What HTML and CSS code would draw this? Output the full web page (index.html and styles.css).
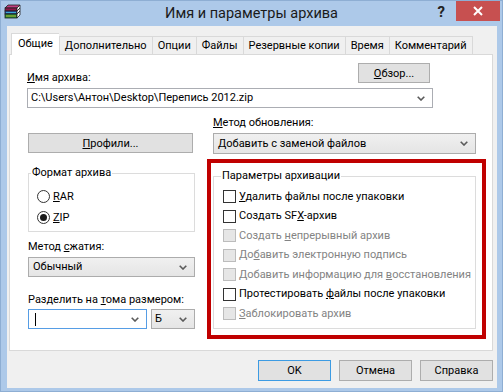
FILE: index.html
```html
<!DOCTYPE html>
<html lang="ru">
<head>
    <meta charset="UTF-8">
    <title>Имя и параметры архива</title>
    <link rel="stylesheet" href="styles.css">
</head>
<body>
<div class="window">
    <div class="titlebar">
        <div class="title-left">
            <svg class="app-icon" width="17" height="17" viewBox="0 0 17 17">
                <!-- top book -->
                <polygon points="4,1 16,1 13,4 1,4" fill="#c04080" stroke="#202020" stroke-width="0.8"/>
                <rect x="1" y="4" width="12" height="3" fill="#8a1848" stroke="#202020" stroke-width="0.8"/>
                <polygon points="13,4 16,1 16,4 13,7" fill="#ffffff" stroke="#202020" stroke-width="0.8"/>
                <!-- middle book -->
                <rect x="1" y="7" width="12" height="3" fill="#2850b0" stroke="#202020" stroke-width="0.8"/>
                <polygon points="13,7 16,4 16,7 13,10" fill="#ffffff" stroke="#202020" stroke-width="0.8"/>
                <line x1="2" y1="8.5" x2="12" y2="8.5" stroke="#40c0e0" stroke-width="0.8"/>
                <!-- bottom book -->
                <rect x="1" y="10" width="12" height="4" fill="#208838" stroke="#202020" stroke-width="0.8"/>
                <polygon points="13,10 16,7 16,11 13,14" fill="#ffffff" stroke="#202020" stroke-width="0.8"/>
                <line x1="2" y1="12" x2="12" y2="12" stroke="#e0c030" stroke-width="0.8"/>
            </svg>
        </div>
        <div class="title">Имя и параметры архива</div>
        <div class="controls">
            <span class="help">?</span>
            <span class="close">
                <svg width="10" height="10" viewBox="0 0 10 10">
                    <path d="M1 1 L9 9 M9 1 L1 9" stroke="#ffffff" stroke-width="2" fill="none"/>
                </svg>
            </span>
        </div>
    </div>

    <div class="client">
        <div class="tabs">
            <div class="tab active">Общие</div>
            <div class="tab">Дополнительно</div>
            <div class="tab">Опции</div>
            <div class="tab">Файлы</div>
            <div class="tab">Резервные копии</div>
            <div class="tab">Время</div>
            <div class="tab last">Комментарий</div>
        </div>

        <div class="panel">
            <div class="name-row">
                <span class="name-label"><u>И</u>мя архива:</span>
                <button class="btn browse"><u>О</u>бзор...</button>
            </div>
            <div class="combo edit path">
                <span>C:\Users\Антон\Desktop\Перепись 2012.zip</span>
                <svg class="chev" width="8" height="5" viewBox="0 0 8 5"><path d="M0.7 0.7 L4 4 L7.3 0.7" stroke="#5a5a5a" stroke-width="1.6" fill="none"/></svg>
            </div>

            <div class="columns">
                <div class="col-left">
                    <button class="btn profiles"><u>П</u>рофили...</button>

                    <fieldset class="group format">
                        <legend>Формат архива</legend>
                        <div class="radio-row"><span class="radio"></span><span><u>R</u>AR</span></div>
                        <div class="radio-row"><span class="radio on"></span><span><u>Z</u>IP</span></div>
                    </fieldset>

                    <div class="method-label">Метод <u>с</u>жатия:</div>
                    <div class="combo method">
                        <span>Обычный</span>
                        <svg class="chev" width="8" height="5" viewBox="0 0 8 5"><path d="M0.7 0.7 L4 4 L7.3 0.7" stroke="#5a5a5a" stroke-width="1.6" fill="none"/></svg>
                    </div>

                    <div class="split-label">Разделить на <u>т</u>ома размером:</div>
                    <div class="split-row">
                        <div class="combo edit focus split-size">
                            <span class="caret"></span>
                            <svg class="chev" width="8" height="5" viewBox="0 0 8 5"><path d="M0.7 0.7 L4 4 L7.3 0.7" stroke="#5a5a5a" stroke-width="1.6" fill="none"/></svg>
                        </div>
                        <div class="combo split-unit">
                            <span>Б</span>
                            <svg class="chev" width="8" height="5" viewBox="0 0 8 5"><path d="M0.7 0.7 L4 4 L7.3 0.7" stroke="#5a5a5a" stroke-width="1.6" fill="none"/></svg>
                        </div>
                    </div>
                </div>

                <div class="col-right">
                    <div class="update-label"><u>М</u>етод обновления:</div>
                    <div class="combo update">
                        <span>Добавить с заменой файлов</span>
                        <svg class="chev" width="8" height="5" viewBox="0 0 8 5"><path d="M0.7 0.7 L4 4 L7.3 0.7" stroke="#5a5a5a" stroke-width="1.6" fill="none"/></svg>
                    </div>

                    <div class="redbox">
                        <fieldset class="group options">
                            <legend>Параметры архивации</legend>
                            <div class="check-row"><span class="box"></span><span><u>У</u>далить файлы после упаковки</span></div>
                            <div class="check-row"><span class="box"></span><span>Создать SF<u>X</u>-архив</span></div>
                            <div class="check-row disabled"><span class="box"></span><span>Создать <u>н</u>епрерывный архив</span></div>
                            <div class="check-row disabled"><span class="box"></span><span>До<u>б</u>авить электронную подпись</span></div>
                            <div class="check-row disabled"><span class="box"></span><span>Добавить информацию для <u>в</u>осстановления</span></div>
                            <div class="check-row"><span class="box"></span><span>Протестировать <u>ф</u>айлы после упаковки</span></div>
                            <div class="check-row disabled"><span class="box"></span><span><u>З</u>аблокировать архив</span></div>
                        </fieldset>
                    </div>
                </div>
            </div>
        </div>

        <div class="actions">
            <button class="btn ok">OK</button>
            <button class="btn">Отмена</button>
            <button class="btn">Справка</button>
        </div>
    </div>
</div>
</body>
</html>
```

FILE: styles.css
```css
/* Base */
body {
    margin: 0;
    font-family: Roboto, "Noto Sans", sans-serif;
    font-size: 11px;
    line-height: 16px;
    color: #000;
    white-space: nowrap;
}

u {
    text-decoration: underline;
    text-underline-offset: 1px;
}

/* Window frame */
.window {
    width: 503px;
    height: 392px;
    box-sizing: border-box;
    border: 1px solid #8eaed3;
    background: #adc9e9;
    display: flex;
    flex-direction: column;
}

.titlebar {
    height: 25px;
    display: grid;
    grid-template-columns: 1fr auto 1fr;
    align-items: start;
}

.app-icon {
    display: block;
    margin: 3px 0 0 3px;
}

.title {
    font-size: 14.5px;
    line-height: 25px;
    color: #1a1a1a;
}

.controls {
    display: flex;
    justify-content: flex-end;
    align-items: flex-start;
}

.help {
    font-weight: bold;
    font-size: 15px;
    line-height: 22px;
    color: #222;
    margin-right: 11px;
}

.close {
    width: 44px;
    height: 20px;
    margin-right: 2px;
    background: #c75050;
    display: flex;
    align-items: center;
    justify-content: center;
}

.client {
    flex: 1;
    margin: 0 5px 3px 6px;
    padding: 0 4px 0 2px;
    background: #f0f0f0;
}

/* Tabs */
.tabs {
    display: flex;
    align-items: flex-end;
    height: 21px;
    padding-top: 7px;
    margin-left: 2px;
}

.tab {
    height: 18px;
    box-sizing: border-box;
    padding: 0 5px;
    line-height: 17px;
    background: #f0f0f0;
    border: 1px solid #d9d9d9;
    border-right: none;
    border-bottom: none;
}

.tab.last {
    border-right: 1px solid #d9d9d9;
}

.tab.active {
    position: relative;
    z-index: 1;
    height: 22px;
    margin-bottom: -1px;
    padding: 0 6px;
    line-height: 20px;
    background: #fff;
}

.panel {
    height: 297px;
    box-sizing: border-box;
    background: #fff;
    border: 1px solid #d9d9d9;
    padding: 8px 0 0 17px;
}

/* Controls */
.btn {
    display: block;
    height: 20px;
    box-sizing: border-box;
    padding: 0;
    border: 1px solid #adadad;
    background: #e1e1e1;
    font: inherit;
    line-height: 17px;
    color: #000;
    text-align: center;
}

.combo {
    display: flex;
    align-items: center;
    justify-content: space-between;
    height: 20px;
    box-sizing: border-box;
    padding: 0 7px 0 4px;
    border: 1px solid #acacac;
    background: linear-gradient(#f0f0f0, #e5e5e5);
}

.combo.edit {
    background: #fff;
    border-color: #abadb3;
}

.combo.focus {
    border-color: #569de5;
}

.chev {
    display: block;
    flex: none;
}

.caret {
    width: 0;
    height: 13px;
    margin-left: 2px;
    border-left: 1px solid #000;
}

/* Top section */
.name-row {
    width: 406px;
    display: flex;
    justify-content: space-between;
    align-items: flex-end;
}

.name-label {
    margin-bottom: -3px;
}

.browse {
    width: 72px;
    margin-right: 3px;
}

.path {
    width: 406px;
    margin-top: 5px;
    padding-left: 3px;
}

.columns {
    display: flex;
    gap: 12px;
    margin-left: 1px;
}

/* Left column */
.col-left {
    width: 167px;
    display: flex;
    flex-direction: column;
}

.profiles {
    width: 165px;
    margin-top: 25px;
}

.group {
    margin: 0;
    min-width: 0;
    border: 1px solid #dcdcdc;
}

.group legend {
    padding: 0 1px;
    margin-left: -2px;
    line-height: 16px;
}

.format {
    margin-top: 12px;
    padding: 5px 0 3px 4px;
}

.radio-row {
    display: flex;
    align-items: center;
    gap: 3px;
    height: 21px;
    padding-left: 4px;
}

.radio {
    width: 13px;
    height: 13px;
    box-sizing: border-box;
    border: 1px solid #333;
    border-radius: 50%;
    background: #fff;
    display: flex;
    align-items: center;
    justify-content: center;
}

.radio.on::after {
    content: '';
    width: 7px;
    height: 7px;
    border-radius: 50%;
    background: #1a1a1a;
}

.method-label {
    margin-top: 7px;
}

.method {
    margin-top: 2px;
}

.split-label {
    margin-top: 15px;
}

.split-row {
    display: flex;
    gap: 4px;
    margin-top: 1px;
}

.split-size {
    width: 119px;
    padding-left: 4px;
}

.split-unit {
    width: 44px;
    padding-left: 3px;
}

/* Right column */
.col-right {
    width: 279px;
}

.update-label {
    margin: 7px 0 0 6px;
}

.update {
    width: 263px;
    height: 21px;
    margin: 2px 0 0 6px;
}

.redbox {
    margin-top: 5px;
    border: 4px solid #c00000;
    padding: 5px 6px 6px 2px;
}

.options {
    padding: 3px 0 4px 9px;
}

.check-row {
    display: flex;
    align-items: center;
    gap: 3px;
    height: 19.5px;
}

.box {
    width: 13px;
    height: 13px;
    box-sizing: border-box;
    border: 1px solid #333;
    background: #fff;
}

.check-row.disabled {
    color: #838383;
}

.check-row.disabled .box {
    border-color: #bcbcbc;
    background: #e6e6e6;
}

/* Dialog buttons */
.actions {
    display: flex;
    justify-content: flex-end;
    gap: 8px;
    margin-top: 9px;
}

.actions .btn {
    width: 73px;
    height: 21px;
    line-height: 18px;
}

.actions .ok {
    border-color: #3c9be3;
}
```
